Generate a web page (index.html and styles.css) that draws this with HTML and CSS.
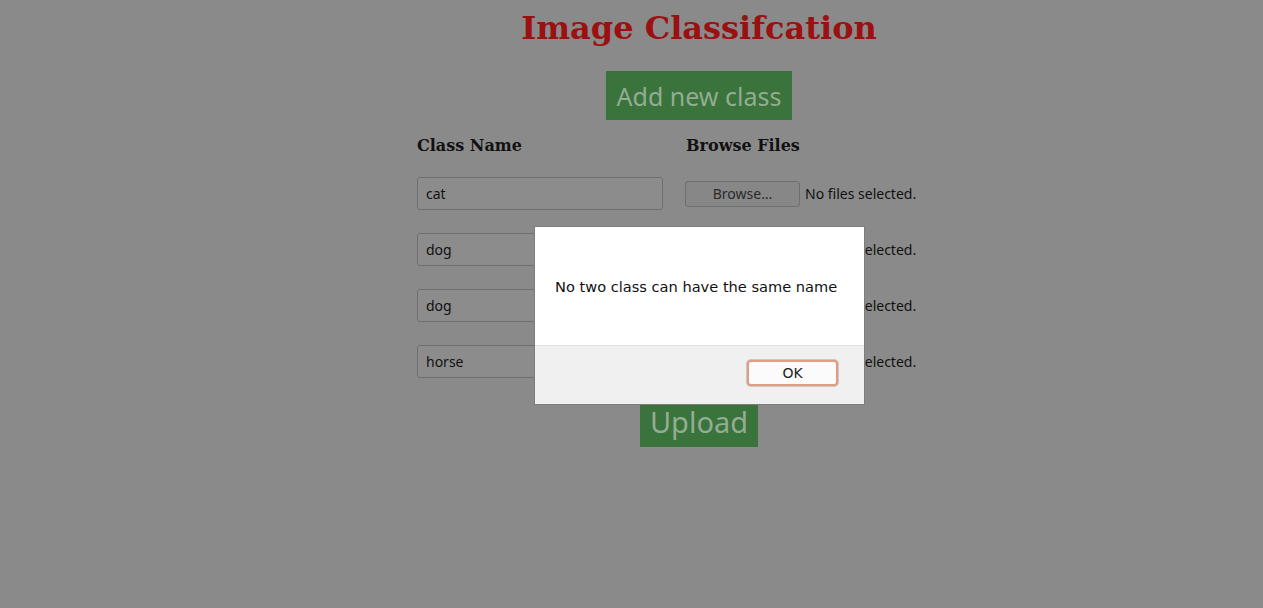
FILE: index.html
```html
<!DOCTYPE html>
<html>
<head>
<meta charset="utf-8">
<title>Image Classifcation</title>
<link rel="stylesheet" href="styles.css">
</head>
<body>
<main class="page">
  <h1 class="title">Image Classifcation</h1>
  <div class="center"><button class="btn-green btn-add">Add new class</button></div>
  <div class="grid">
    <h3 class="col-head">Class Name</h3>
    <h3 class="col-head">Browse Files</h3>
    <input class="name-input" type="text" value="cat">
    <div class="file"><span class="browse">Browse…</span><span class="nofile">No files selected.</span></div>
    <input class="name-input" type="text" value="dog">
    <div class="file"><span class="browse">Browse…</span><span class="nofile">No files selected.</span></div>
    <input class="name-input" type="text" value="dog">
    <div class="file"><span class="browse">Browse…</span><span class="nofile">No files selected.</span></div>
    <input class="name-input" type="text" value="horse">
    <div class="file"><span class="browse">Browse…</span><span class="nofile">No files selected.</span></div>
  </div>
  <div class="center"><button class="btn-green btn-upload">Upload</button></div>
</main>
<div class="dialog">
  <div class="dialog-body">No two class can have the same name</div>
  <div class="dialog-foot"><button class="ok">OK</button></div>
</div>
</body>
</html>
```
FILE: styles.css
```css
html, body {
  margin: 0;
  padding: 0;
  background: #8a8a8a;
  height: 100%;
}
body {
  font-family: "Noto Sans", "DejaVu Sans", sans-serif;
  color: #111;
}
.page {
  width: 564px;
  margin-left: 417px;
  padding-top: 10px;
}
.title {
  margin: 0;
  font-family: "DejaVu Serif", serif;
  font-weight: bold;
  font-size: 32px;
  line-height: 37px;
  color: #9b1010;
  text-align: center;
}
.center {
  display: flex;
  justify-content: center;
}
.btn-green {
  box-sizing: border-box;
  background: #3a733b;
  color: #93ad93;
  border: none;
  font-family: "Noto Sans", sans-serif;
  margin: 0;
}
.btn-add {
  margin-top: 24px;
  height: 49px;
  padding: 0 11px;
  font-size: 25px;
}
.grid {
  display: grid;
  grid-template-columns: 246px auto;
  column-gap: 23px;
  row-gap: 23px;
  margin-top: 15px;
  align-items: center;
  justify-content: start;
}
.col-head {
  margin: 0;
  font-family: "DejaVu Serif", serif;
  font-weight: bold;
  font-size: 16px;
  line-height: 22px;
  color: #111;
  margin-bottom: -3px;
}
.name-input {
  box-sizing: border-box;
  width: 246px;
  height: 33px;
  margin: 0;
  padding: 0 8px;
  border: 1px solid #6f6f6f;
  border-radius: 3px;
  background: #8c8c8c;
  font-family: "Noto Sans", sans-serif;
  font-size: 14px;
  color: #111;
}
.file {
  display: flex;
  align-items: center;
  gap: 5px;
  margin-left: -1px;
  font-size: 14px;
}
.browse {
  box-sizing: border-box;
  width: 115px;
  height: 26px;
  border: 1px solid #6f6f6f;
  border-radius: 3px;
  display: flex;
  align-items: center;
  justify-content: center;
  color: #2a2a2a;
  background: #878787;
}
.nofile {
  color: #111;
}
.btn-upload {
  margin-top: 26px;
  height: 43px;
  padding: 0 10px 7px;
  line-height: 36px;
  font-size: 29px;
}
.dialog {
  position: absolute;
  left: 535px;
  top: 227px;
  width: 329px;
  height: 177px;
  background: #fff;
  box-shadow: 0 0 0 1px #7d7d7d;
  display: flex;
  flex-direction: column;
  font-family: "DejaVu Sans", sans-serif;
}
.dialog-body {
  height: 118px;
  display: flex;
  align-items: center;
  padding: 0 0 0 20px;
  box-sizing: border-box;
  font-size: 14.6px;
  color: #111;
}
.dialog-foot {
  flex: 1;
  background: #f0f0f0;
  border-top: 1px solid #e2e2e2;
  display: flex;
  align-items: center;
  justify-content: flex-end;
  padding-right: 26px;
}
.ok {
  box-sizing: border-box;
  width: 91px;
  height: 26px;
  margin-top: -4px;
  background: #fbfbfb;
  border: 2px solid #e29c83;
  border-radius: 4px;
  box-shadow: 0 0 0 1px #c9c9c9;
  font-family: "DejaVu Sans", sans-serif;
  font-size: 14px;
  color: #222;
}
```
